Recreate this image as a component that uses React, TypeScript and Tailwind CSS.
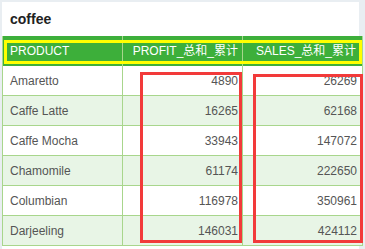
const rows = [
  { product: "Amaretto", profit: 4890, sales: 26269 },
  { product: "Caffe Latte", profit: 16265, sales: 62168 },
  { product: "Caffe Mocha", profit: 33943, sales: 147072 },
  { product: "Chamomile", profit: 61174, sales: 222650 },
  { product: "Columbian", profit: 116978, sales: 350961 },
  { product: "Darjeeling", profit: 146031, sales: 424112 },
];

export default function App() {
  return (
    <div
      className="relative w-[365px] h-[249px] overflow-hidden bg-[#e9eef2] pt-[2px] pl-[2px]"
      style={{ fontFamily: '"Liberation Sans", Arial, "Noto Sans CJK SC", sans-serif' }}
    >
      <div className="w-[357px] h-[247px] bg-white">
        <div className="h-[34px] flex items-center pl-[8px] text-[14px] font-bold text-[#222]">
          coffee
        </div>
        {/* table */}
        <div className="w-[361px] border-l border-[#a8d68c] text-[12px]">
          <div className="flex h-[30px] bg-[#3daf3a] text-white">
            <div className="w-[120px] flex items-center pl-[7px] border-r border-[#a8d68c]">PRODUCT</div>
            <div className="w-[120px] flex items-center justify-end pr-[4px] border-r border-[#a8d68c]">
              PROFIT_总和_累计
            </div>
            <div className="w-[120px] flex items-center justify-end pr-[6px] border-r border-[#a8d68c]">
              SALES_总和_累计
            </div>
          </div>
          {rows.map((r, i) => (
            <div
              key={r.product}
              className={`flex h-[30px] border-b border-[#a8d68c] text-[#555] ${i % 2 === 1 ? "bg-[#e8f5e6]" : "bg-white"}`}
            >
              <div className="w-[120px] flex items-center pl-[7px] border-r border-[#a8d68c]">{r.product}</div>
              <div className="w-[120px] flex items-center justify-end pr-[4px] border-r border-[#a8d68c]">
                {r.profit}
              </div>
              <div className="w-[120px] flex items-center justify-end pr-[5px] border-r border-[#a8d68c]">
                {r.sales}
              </div>
            </div>
          ))}
        </div>
      </div>

      {/* annotation overlays */}
      <div className="absolute left-[4px] top-[40px] w-[358px] h-[24px] border-[3px] border-[#ffff00]" />
      <div className="absolute left-[140px] top-[72px] w-[102px] h-[171px] border-[3px] border-[#f23a3a]" />
      <div className="absolute left-[253px] top-[74px] w-[110px] h-[169px] border-[3px] border-[#f23a3a]" />
    </div>
  );
}
